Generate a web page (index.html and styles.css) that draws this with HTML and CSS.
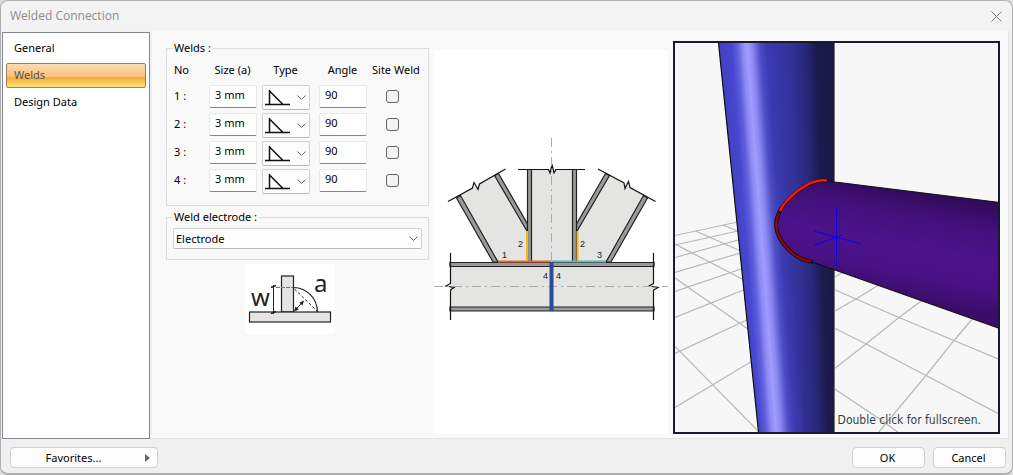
FILE: index.html
```html
<!DOCTYPE html>
<html lang="en">
<head>
    <meta charset="UTF-8">
    <meta name="viewport" content="width=device-width, initial-scale=1.0">
    <title>Welded Connection</title>
    <link rel="stylesheet" href="styles.css">
</head>
<body>

<div class="dialog">

    <!-- Title bar -->
    <header class="title-bar">
        <h1>Welded Connection</h1>
        <button type="button" class="close-btn" aria-label="Close">
            <svg width="11" height="11" viewBox="0 0 11 11"><path d="M0.5 0.5L10.5 10.5M10.5 0.5L0.5 10.5" stroke="#777" fill="none"/></svg>
        </button>
    </header>

    <div class="dialog-body">

        <!-- Pages -->
        <nav class="pages">
            <a href="#general">General</a>
            <a href="#welds" class="active">Welds</a>
            <a href="#design">Design Data</a>
        </nav>

        <main class="content">

            <!-- Weld settings -->
            <form class="settings">
                <fieldset class="group">
                    <legend>Welds :</legend>
                    <table class="weld-table">
                        <thead>
                            <tr>
                                <th class="col-no">No</th>
                                <th class="col-size">Size (a)</th>
                                <th class="col-type">Type</th>
                                <th class="col-angle">Angle</th>
                                <th class="col-site">Site Weld</th>
                            </tr>
                        </thead>
                        <tbody>
                            <tr>
                                <td class="col-no">1 :</td>
                                <td><input type="text" class="field" value="3 mm" aria-label="Weld 1 size"></td>
                                <td>
                                    <div class="type-box">
                                        <select aria-label="Weld 1 type"><option></option></select>
                                        <svg class="fillet" viewBox="0 0 25 17"><path d="M0 15.5H25M4.5 1V15.5M4.5 2L18 15.5" /></svg>
                                        <svg class="chevron" viewBox="0 0 9 5"><path d="M0.5 0.5L4.5 4.5L8.5 0.5" /></svg>
                                    </div>
                                </td>
                                <td><input type="text" class="field" value="90" aria-label="Weld 1 angle"></td>
                                <td class="col-site"><input type="checkbox" aria-label="Weld 1 site weld"></td>
                            </tr>
                            <tr>
                                <td class="col-no">2 :</td>
                                <td><input type="text" class="field" value="3 mm" aria-label="Weld 2 size"></td>
                                <td>
                                    <div class="type-box">
                                        <select aria-label="Weld 2 type"><option></option></select>
                                        <svg class="fillet" viewBox="0 0 25 17"><path d="M0 15.5H25M4.5 1V15.5M4.5 2L18 15.5" /></svg>
                                        <svg class="chevron" viewBox="0 0 9 5"><path d="M0.5 0.5L4.5 4.5L8.5 0.5" /></svg>
                                    </div>
                                </td>
                                <td><input type="text" class="field" value="90" aria-label="Weld 2 angle"></td>
                                <td class="col-site"><input type="checkbox" aria-label="Weld 2 site weld"></td>
                            </tr>
                            <tr>
                                <td class="col-no">3 :</td>
                                <td><input type="text" class="field" value="3 mm" aria-label="Weld 3 size"></td>
                                <td>
                                    <div class="type-box">
                                        <select aria-label="Weld 3 type"><option></option></select>
                                        <svg class="fillet" viewBox="0 0 25 17"><path d="M0 15.5H25M4.5 1V15.5M4.5 2L18 15.5" /></svg>
                                        <svg class="chevron" viewBox="0 0 9 5"><path d="M0.5 0.5L4.5 4.5L8.5 0.5" /></svg>
                                    </div>
                                </td>
                                <td><input type="text" class="field" value="90" aria-label="Weld 3 angle"></td>
                                <td class="col-site"><input type="checkbox" aria-label="Weld 3 site weld"></td>
                            </tr>
                            <tr>
                                <td class="col-no">4 :</td>
                                <td><input type="text" class="field" value="3 mm" aria-label="Weld 4 size"></td>
                                <td>
                                    <div class="type-box">
                                        <select aria-label="Weld 4 type"><option></option></select>
                                        <svg class="fillet" viewBox="0 0 25 17"><path d="M0 15.5H25M4.5 1V15.5M4.5 2L18 15.5" /></svg>
                                        <svg class="chevron" viewBox="0 0 9 5"><path d="M0.5 0.5L4.5 4.5L8.5 0.5" /></svg>
                                    </div>
                                </td>
                                <td><input type="text" class="field" value="90" aria-label="Weld 4 angle"></td>
                                <td class="col-site"><input type="checkbox" aria-label="Weld 4 site weld"></td>
                            </tr>
                        </tbody>
                    </table>
                </fieldset>

                <fieldset class="group electrode">
                    <legend>Weld electrode :</legend>
                    <div class="electrode-box">
                        <select aria-label="Weld electrode">
                            <option>Electrode</option>
                        </select>
                        <svg class="chevron" viewBox="0 0 9 5"><path d="M0.5 0.5L4.5 4.5L8.5 0.5" /></svg>
                    </div>
                </fieldset>

                <!-- Weld throat sketch -->
                <svg class="throat" viewBox="245 264 90 70">
                    <g fill="#e4e4e3" stroke="#222" stroke-width="1.2">
                        <rect x="281.5" y="276" width="12" height="36"/>
                        <rect x="249.5" y="312" width="81" height="10"/>
                    </g>
                    <g fill="none" stroke="#222">
                        <path d="M273.5 285V314"/>
                        <path d="M271 287.5L276 285.5M271 313.5L276 311.5" stroke-width="1.6"/>
                        <path d="M276 287.5H293" stroke="#777" stroke-dasharray="4 1"/>
                        <path d="M293.5 287.5C307 288 317 298 317.5 312" stroke-width="1.2"/>
                        <path d="M294.5 289L317 311" stroke-dasharray="3 2"/>
                        <path d="M295.5 310L302.5 302"/>
                    </g>
                    <path d="M294 311.5L295.5 306.5L299 309.5ZM304 300.5L299.5 302.5L302.5 305.5Z" fill="#222"/>
                    <text x="251" y="306" class="throat-label">w</text>
                    <text x="314" y="292" class="throat-label">a</text>
                </svg>
            </form>

            <!-- Joint drawing -->
            <div class="joint">
                <svg viewBox="434 50 234 383" preserveAspectRatio="xMidYMin meet">
                    <!-- braces -->
                    <g fill="#e4e4e3">
                        <path d="M458 196L497 174.5L527 228V262H495Z"/>
                        <path d="M646 197L607 174.5L577 228V262H609Z"/>
                        <path d="M530 169.5H574V262H530Z"/>
                        <path d="M450 263H654V311H450Z"/>
                    </g>
                    <g fill="#9a9a99" stroke="#222" stroke-width="1.2">
                        <path d="M456.5 198L460.5 195.5L498 262H493Z"/>
                        <path d="M494.5 175.5L498.5 173.5L527.5 224V232Z"/>
                        <path d="M647.5 198L643.5 195.5L606 262H611Z"/>
                        <path d="M609.5 175.5L605.5 173.5L576.5 224V232Z"/>
                        <path d="M527.5 169.5H531.5V262H527.5Z"/>
                        <path d="M572.5 169.5H576.5V262H572.5Z"/>
                        <path d="M450 262.5H654V266.5H450Z"/>
                        <path d="M450 307H654V311H450Z"/>
                    </g>
                    <!-- break lines -->
                    <g fill="none" stroke="#111" stroke-width="1.2">
                        <path d="M448 201.5L472.5 188L474 182.5L478 189.5L479.5 184L505.5 169"/>
                        <path d="M655.5 201.5L630 187.5L628.5 181.5L625 188.5L624 183L598 169"/>
                        <path d="M518 169.5H548.5L550 173L552 164.5L554 173L556 169.5H585"/>
                        <path d="M450.5 253V283.5L446 286L454 287.5L450.5 290V320"/>
                        <path d="M653.5 253V283.5L649 286L658 287.5L653.5 290V320"/>
                    </g>
                    <path d="M434 286.5H668M551.5 138V262" fill="none" stroke="#aaa" stroke-dasharray="9 4 2 4"/>
                    <!-- welds -->
                    <path d="M498 261.5H551" stroke="#e8623a" stroke-width="2"/>
                    <path d="M552 261.5H606" stroke="#5fb8b8" stroke-width="2"/>
                    <path d="M527 231V261M577.5 231V261" stroke="#f7b516" stroke-width="2"/>
                    <path d="M551.5 262V311" stroke="#2b4c9b" stroke-width="4"/>
                    <g class="weld-label">
                        <text x="502" y="258">1</text>
                        <text x="518" y="247">2</text>
                        <text x="580" y="247">2</text>
                        <text x="597" y="258">3</text>
                        <text x="543" y="279">4</text>
                        <text x="556" y="279">4</text>
                    </g>
                </svg>
            </div>

            <!-- 3D view -->
            <div class="viewer">
                <svg viewBox="675 43 323 389" preserveAspectRatio="xMinYMin slice">
                    <defs>
                        <linearGradient id="post" gradientUnits="userSpaceOnUse" x1="770" y1="46" x2="834" y2="44">
                            <stop offset="0" stop-color="#3939ae"/>
                            <stop offset="0.3" stop-color="#32329a"/>
                            <stop offset="0.55" stop-color="#28287a"/>
                            <stop offset="0.72" stop-color="#1a1a4c"/>
                            <stop offset="1" stop-color="#191946"/>
                        </linearGradient>
                        <linearGradient id="shine" gradientUnits="userSpaceOnUse" x1="707" y1="46" x2="787" y2="40">
                            <stop offset="0.1" stop-color="#4040bc"/>
                            <stop offset="0.3" stop-color="#4646d0"/>
                            <stop offset="0.38" stop-color="#6060dc"/>
                            <stop offset="0.44" stop-color="#8a88f2"/>
                            <stop offset="0.5" stop-color="#a09cff"/>
                            <stop offset="0.56" stop-color="#8a88f2"/>
                            <stop offset="0.66" stop-color="#4c4cc4"/>
                            <stop offset="0.74" stop-color="#3b3bb0"/>
                            <stop offset="0.86" stop-color="#3939ae" stop-opacity="0"/>
                        </linearGradient>
                        <linearGradient id="pipe" gradientUnits="userSpaceOnUse" x1="900" y1="190" x2="880" y2="294">
                            <stop offset="0" stop-color="#330b5c"/>
                            <stop offset="0.2" stop-color="#42107a"/>
                            <stop offset="0.5" stop-color="#4c128a"/>
                            <stop offset="0.75" stop-color="#4a1186"/>
                            <stop offset="1" stop-color="#3a0d68"/>
                        </linearGradient>
                    </defs>

                    <!-- floor grid -->
                    <g fill="none" stroke="#b4b8b6" stroke-width="1.2">
                        <path d="M675 235.5L740 221.5M675 245L740 230.5M675 257.5L740 239.5M675 272.5L742 252.5M675 291.5L744 268M675 317.5L746 289M675 353.5L750 318.5M675 407.5L754 360"/>
                        <path d="M723 225L740 232M695.5 231L742 251.5M675 244L744 280M675 278L750 330.5M675 346.5L760 433"/>
                        <path d="M834 289.5L856 299L899 317.5L954 340.5L998 359M834 328L866 344L926 375.5L998 413.5M834 388.5L884 422L899 433"/>
                        <path d="M834 277.5L845 271M834 311.5L856 299L882 283M834 369L866 344L899 317.5L924 299M878 433L926 375.5L954 340.5L974 317"/>
                    </g>

                    <!-- post -->
                    <path d="M718.5 43H834.5V432H758.5Z" fill="url(#post)"/>
                    <path d="M718.5 43H834.5V432H758.5Z" fill="url(#shine)"/>
                    <path d="M718.5 43L758.5 432" stroke="#111" stroke-width="1.2"/>
                    <path d="M834.5 43V432" stroke="#777" stroke-width="1"/>

                    <!-- pipe -->
                    <path d="M829 181L835 182L1000 202.5V328.5L835 270L812 262C796 257 777 242 776 224C776 208 805 178 829 181Z" fill="url(#pipe)"/>
                    <path d="M829 181L835 182L1000 202.5M1000 328.5L835 270L812 262" fill="none" stroke="#111" stroke-width="1.2"/>
                    <path d="M828 181C808 177 782 203 779 213C773 224 777 234 782 242C790 253 800 260 813 262" fill="none" stroke="#111" stroke-width="4"/>
                    <path d="M779 213C773 224 777 234 782 242C790 253 800 260 811 261.5" fill="none" stroke="#a00008" stroke-width="2"/>
                    <path d="M827 180.5C808 177 784 201 780 211" fill="none" stroke="#ff1408" stroke-width="2.5"/>

                    <!-- origin -->
                    <path d="M836.5 208V266M814 231L861 244M814 245.5L842 235" fill="none" stroke="#0c00f0"/>
                </svg>
                <p class="viewer-hint">Double click for fullscreen.</p>
            </div>

        </main>
    </div>

    <!-- Buttons -->
    <footer class="buttons">
        <button type="button" class="btn favorites"><span>Favorites...</span><svg width="5" height="8" viewBox="0 0 5 8"><path d="M0 0L5 4L0 8Z" fill="#666"/></svg></button>
        <button type="button" class="btn">OK</button>
        <button type="button" class="btn">Cancel</button>
    </footer>

</div>

</body>
</html>
```
FILE: styles.css
```css
* {
    box-sizing: border-box;
}
body {
    margin: 0;
    font-family: "Noto Sans", sans-serif;
    font-size: 11px;
    line-height: 16px;
    color: #000;
    background-color: #dcdcdc;
}
input, select, button {
    font: inherit;
    color: inherit;
    margin: 0;
}
svg {
    display: block;
}
.dialog {
    display: flex;
    flex-direction: column;
    min-height: 100vh;
    background-color: #f0f0f0;
    border: 1px solid #b0b0b0;
    border-bottom-width: 2px;
    border-radius: 8px;
}
/* title bar */
.title-bar {
    display: flex;
    align-items: center;
    justify-content: space-between;
    height: 30px;
    padding: 0 10px 0 9px;
    background-color: #f3f3f3;
    border-radius: 8px 8px 0 0;
}
.title-bar h1 {
    margin: 0;
    font-family: "Open Sans", sans-serif;
    font-size: 12px;
    font-weight: normal;
    color: #8c8c8c;
}
.close-btn {
    padding: 0;
    border: none;
    background: none;
}
.dialog-body {
    display: flex;
    flex: 1;
    gap: 2px;
    padding: 0 3px 0 1px;
}
/* page list */
.pages {
    display: flex;
    flex-direction: column;
    gap: 2px;
    width: 148px;
    margin-top: 1px;
    padding: 3px;
    background-color: #fff;
    border: 1px solid #828790;
}
.pages a {
    height: 25px;
    padding: 0 7px;
    line-height: 22px;
    color: #000;
    text-decoration: none;
    border: 1px solid transparent;
    border-radius: 2px;
}
.pages .active {
    color: #555;
    border-color: #a08050;
    background: linear-gradient(#fbdcb8, #f9c078 55%, #f6a636 58%, #fde27a);
}
/* page content */
.content {
    display: flex;
    flex: 1;
    gap: 5px;
    padding: 10px 8px 4px 14px;
    background-color: #f9f9f9;
    border: 1px solid #e5e5e5;
    border-width: 0 1px 1px 0;
}
.settings {
    width: 263px;
}
.group {
    margin: 0 0 2px;
    padding: 0 6px 8px;
    border: 1px solid #dcdcdc;
}
.group legend {
    padding: 0 2px 0 1px;
    line-height: 14px;
}
.weld-table {
    width: 100%;
    border-collapse: collapse;
    table-layout: fixed;
}
.weld-table th {
    height: 30px;
    padding: 0 6px 0 0;
    font-weight: normal;
}
.weld-table td {
    height: 28px;
    padding: 0 5px 0 0;
    vertical-align: top;
}
.weld-table .col-no {
    width: 36px;
    padding-left: 1px;
    text-align: left;
}
.weld-table td.col-no {
    padding-top: 3px;
}
.weld-table .col-size {
    width: 53px;
}
.weld-table .col-type {
    width: 57px;
    padding-right: 10px;
}
.weld-table .col-angle {
    width: 53px;
}
.weld-table .col-site {
    padding-right: 10px;
    text-align: center;
    white-space: nowrap;
}
.field {
    display: block;
    width: 48px;
    height: 23px;
    padding: 0 5px 4px;
    background-color: #fff;
    border: 1px solid #e8e8e8;
    border-bottom-color: #868686;
    border-radius: 2px;
}
input[type="checkbox"] {
    appearance: none;
    width: 13px;
    height: 13px;
    margin: 5px 0 0;
    background-color: #f3f3f3;
    border: 1px solid #626262;
    border-radius: 3px;
}
.type-box, .electrode-box {
    position: relative;
}
.type-box {
    width: 48px;
}
.type-box select, .electrode-box select {
    display: block;
    appearance: none;
    width: 100%;
    height: 25px;
    background-color: #fdfdfd;
    border: 1px solid #d0d0d0;
    border-bottom-color: #b8b8b8;
    border-radius: 2px;
}
.electrode-box select {
    height: 21px;
    padding: 0 2px;
}
/* glyphs lying over the drop-downs */
.fillet, .chevron {
    position: absolute;
    fill: none;
    pointer-events: none;
}
.fillet {
    left: 3px;
    top: 4px;
    width: 25px;
    height: 17px;
    stroke: #111;
    stroke-width: 1.5;
}
.chevron {
    right: 4px;
    top: 10px;
    width: 9px;
    height: 5px;
    stroke: #666;
}
.electrode-box .chevron {
    top: 8px;
}
.electrode {
    margin-top: 4px;
    padding: 4px 6px 10px;
}
.throat {
    width: 90px;
    height: 70px;
    margin: 4px auto 0 79px;
    background-color: #fff;
}
.throat-label {
    font-size: 24px;
    fill: #222;
}
/* joint drawing */
.joint {
    width: 234px;
    margin-top: 9px;
    background-color: #fff;
}
.joint svg {
    width: 100%;
}
.weld-label {
    font-family: "Liberation Sans", Arial, sans-serif;
    font-size: 9px;
    fill: #222;
}
/* 3D view */
.viewer {
    position: relative;
    flex: 1;
    background-color: #f7f7f7;
    border: 2px solid #181a2e;
}
.viewer svg {
    width: 100%;
    height: 100%;
}
.viewer-hint {
    position: absolute;
    right: 17px;
    bottom: 4px;
    margin: 0;
    font-family: "DejaVu Sans Condensed", "DejaVu Sans", sans-serif;
    font-size: 12px;
    color: #2c4448;
}
/* bottom buttons */
.buttons {
    display: flex;
    gap: 8px;
    padding: 8px 6px 5px 9px;
}
.btn {
    width: 73px;
    height: 21px;
    padding: 0 2px 0 0;
    line-height: 18px;
    background-color: #fdfdfd;
    border: 1px solid #d0d0d0;
    border-radius: 4px;
}
.favorites {
    display: flex;
    align-items: center;
    width: 148px;
    margin-right: auto;
    padding: 0 7px;
}
.favorites span {
    flex: 1;
    padding-right: 16px;
}
```
